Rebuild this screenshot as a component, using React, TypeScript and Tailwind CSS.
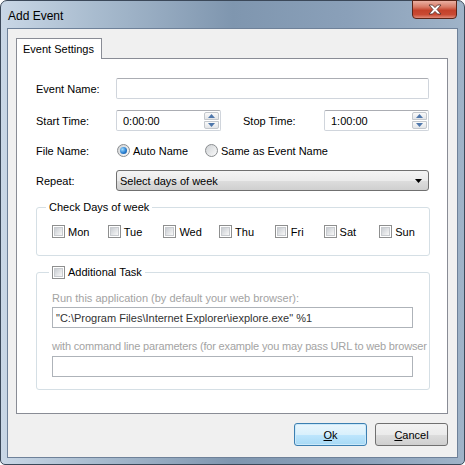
import React from "react";

const DAYS = [
  { name: "Mon", w: "w-[56px]" },
  { name: "Tue", w: "w-[56px]" },
  { name: "Wed", w: "w-[56px]" },
  { name: "Thu", w: "w-[56px]" },
  { name: "Fri", w: "w-[49px]" },
  { name: "Sat", w: "w-[56px]" },
  { name: "Sun", w: "w-[50px]" },
];

function CheckBox() {
  return (
    <span className="inline-block h-[13px] w-[13px] shrink-0 border border-[#8e8f8f] bg-white p-[1px]">
      <span className="block h-full w-full border border-[#c8cbcf] bg-gradient-to-br from-[#c9cdd2] to-[#f8f8f8]" />
    </span>
  );
}

function Radio({ checked }: { checked?: boolean }) {
  return (
    <span className="flex h-[13px] w-[13px] shrink-0 items-center justify-center rounded-full border border-[#8a8d90] bg-gradient-to-br from-[#cfd2d5] to-[#fbfbfb]">
      {checked && (
        <span className="h-[7px] w-[7px] rounded-full bg-[radial-gradient(circle_at_35%_35%,#9edcff,#2a7fd0_55%,#0b4a92)]" />
      )}
    </span>
  );
}

function Arrow({ up }: { up?: boolean }) {
  return (
    <svg width="7" height="4" viewBox="0 0 7 4">
      <path d={up ? "M0 4 L3.5 0 L7 4Z" : "M0 0 L3.5 4 L7 0Z"} fill="#4f77ab" />
    </svg>
  );
}

function TimeBox({ value }: { value: string }) {
  return (
    <div className="flex h-[21px] w-[105px] items-center rounded-[2px] border border-[#d0d5dc] border-t-[#abadb3] bg-white pl-[6px]">
      <span>{value}</span>
      <div className="ml-auto mr-[1px] flex h-[17px] w-[15px] flex-col gap-px">
        <div className="flex flex-1 items-center justify-center rounded-t-[2px] border border-[#c3c7cc] bg-gradient-to-b from-[#fafafa] to-[#e3e5e8]">
          <Arrow up />
        </div>
        <div className="flex flex-1 items-center justify-center rounded-b-[2px] border border-[#c3c7cc] bg-gradient-to-b from-[#fafafa] to-[#e3e5e8]">
          <Arrow />
        </div>
      </div>
    </div>
  );
}

export default function App() {
  return (
    <div className="h-[465px] w-[465px] font-['Liberation_Sans',Arial,sans-serif] text-[11px] leading-[14px] text-black">
      <div className="flex h-full flex-col rounded-t-[7px] rounded-b-[5px] border border-[#3b4859] bg-[linear-gradient(to_right,#c9d7e6,#a9bccf_20%,#7f96af_50%,#8aa0b9_75%,#9fb3c8)]">
        {/* title bar */}
        <div className="flex h-[27px] shrink-0 items-start">
          <span className="mt-[8px] pl-[7px] text-[12px] leading-[15px]">Add Event</span>
          <div className="ml-auto mr-[7px] flex h-[19px] w-[45px] -mt-px items-center justify-center rounded-b-[4px] border border-[#5b2417] bg-[linear-gradient(to_bottom,#eab0a2,#d87a66_35%,#c4412a_55%,#c94a33_80%,#e08a78)]">
            <svg width="14" height="11" viewBox="0 0 14 11">
              <path
                d="M1 1 L4.5 1 L7 3.6 L9.5 1 L13 1 L9 5.5 L13 10 L9.5 10 L7 7.4 L4.5 10 L1 10 L5 5.5Z"
                fill="#ffffff"
                stroke="#4a2a25"
                strokeWidth="0.8"
                strokeLinejoin="round"
              />
            </svg>
          </div>
        </div>

        {/* client area */}
        <div className="mx-[6px] mb-[6px] flex flex-1 flex-col border border-[#6e8199] bg-[#f0f0f0] pl-[8px] pr-[8px] pt-[9px]">
          <div className="relative z-10 -mb-px flex h-[21px] w-[86px] items-center border border-b-0 border-[#898c95] bg-white pl-[6px]">
            Event Settings
          </div>
          <div className="flex h-[356px] w-[432px] flex-col border border-[#898c95] bg-white pl-[19px] pr-[17px]">
            <div className="mt-[19px] flex h-[21px] items-center">
              <span className="w-[80px]">Event Name:</span>
              <div className="h-[21px] w-[313px] rounded-[2px] border border-[#d0d5dc] border-t-[#abadb3] bg-white" />
            </div>
            <div className="mt-[11px] flex h-[21px] items-center">
              <span className="w-[80px]">Start Time:</span>
              <TimeBox value="0:00:00" />
              <span className="ml-[22px] w-[81px]">Stop Time:</span>
              <TimeBox value="1:00:00" />
            </div>
            <div className="mt-[9px] flex h-[21px] items-center">
              <span className="w-[81px]">File Name:</span>
              <Radio checked />
              <span className="ml-[3px] w-[72px]">Auto Name</span>
              <Radio />
              <span className="ml-[3px]">Same as Event Name</span>
            </div>
            <div className="mt-[9px] flex h-[21px] items-center">
              <span className="w-[80px]">Repeat:</span>
              <div className="flex h-[21px] w-[313px] items-center rounded-[3px] border border-[#707070] bg-[linear-gradient(to_bottom,#f4f4f4,#ebebeb_50%,#dddddd_51%,#cfcfcf)] pl-[3px] pr-[6px]">
                <span>Select days of week</span>
                <svg className="ml-auto" width="7" height="4" viewBox="0 0 7 4">
                  <path d="M0 0 L3.5 4 L7 0Z" fill="#000" />
                </svg>
              </div>
            </div>

            <fieldset className="mt-[9px] w-[394px] min-w-0 rounded-[3px] border border-[#d5dfe5] pb-[17px]">
              <legend className="ml-[9px] px-[3px]">Check Days of week</legend>
              <div className="mt-[11px] flex h-[13px] items-center pl-[15px]">
                {DAYS.map((d) => (
                  <div key={d.name} className={`flex items-center ${d.w}`}>
                    <CheckBox />
                    <span className="ml-[3px]">{d.name}</span>
                  </div>
                ))}
              </div>
            </fieldset>

            <fieldset className="mt-[9px] w-[394px] min-w-0 rounded-[3px] border border-[#d5dfe5] pb-[12px]">
              <legend className="ml-[12px] flex items-center px-[3px]">
                <CheckBox />
                <span className="ml-[3px]">Additional Task</span>
              </legend>
              <div className="pl-[15px]">
                <div className="mt-[12px] text-[#a3a3a3]">Run this application (by default your web browser):</div>
                <div className="mt-[2px] flex h-[21px] w-[361px] items-center border border-[#aeb3b9] bg-white pl-[3px] text-[#333]">
                  "C:\Program Files\Internet Explorer\iexplore.exe" %1
                </div>
                <div className="mt-[11px] whitespace-nowrap tracking-[-0.17px] text-[#a3a3a3]">
                  with command line parameters (for example you may pass URL to web browser
                </div>
                <div className="mt-[3px] h-[21px] w-[361px] border border-[#aeb3b9] bg-white" />
              </div>
            </fieldset>
          </div>

          <div className="mt-[9px] flex justify-end gap-[8px] pr-px">
            <button className="flex h-[23px] w-[73px] items-center justify-center rounded-[3px] border border-[#3c7fb1] bg-[linear-gradient(to_bottom,#eaf6fd,#d9f0fc_50%,#bee6fd_51%,#a7d9f5)] shadow-[inset_0_0_0_1px_#cbe9fa]">
              <span>
                <span className="underline">O</span>k
              </span>
            </button>
            <button className="flex h-[23px] w-[73px] items-center justify-center rounded-[3px] border border-[#707070] bg-[linear-gradient(to_bottom,#f2f2f2,#ebebeb_50%,#dddddd_51%,#cfcfcf)]">
              <span>
                <span className="underline">C</span>ancel
              </span>
            </button>
          </div>
        </div>
      </div>
    </div>
  );
}
